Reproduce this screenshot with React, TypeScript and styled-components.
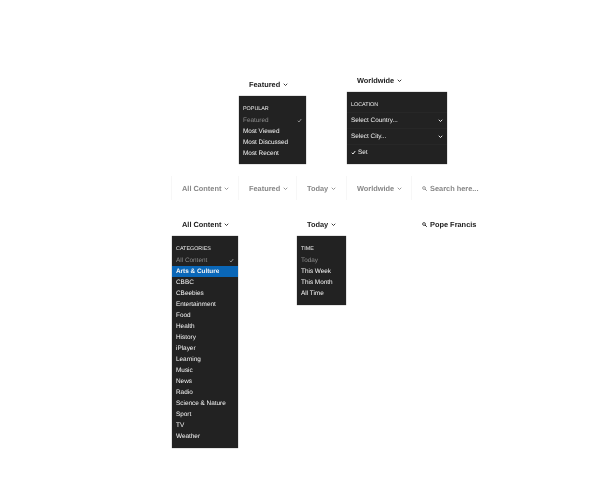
import React from "react";
import styled, { createGlobalStyle } from "styled-components";

const GlobalStyle = createGlobalStyle`
  html, body {
    margin: 0;
    background: #fff;
    font-family: "Liberation Sans", Arial, sans-serif;
    text-rendering: geometricPrecision;
  }
`;

const Page = styled.div`
  width: 600px;
  height: 484px;
  overflow: hidden;
  box-sizing: border-box;
  padding-top: 74px;
  background: #fff;
  filter: blur(0.3px);
`;

const TopRow = styled.div`
  display: flex;
  align-items: flex-end;
  height: 90px;
  padding-left: 239px;
  gap: 41px;
`;

const Column = styled.div`
  display: flex;
  flex-direction: column;
`;

const Label = styled.div<{ $indent?: number }>`
  display: flex;
  align-items: center;
  gap: 3px;
  height: 12px;
  margin-bottom: 6px;
  padding-left: ${(p) => p.$indent ?? 0}px;
  font-size: 7.4px;
  font-weight: bold;
  color: #222;
  white-space: nowrap;
`;

const Panel = styled.div<{ $width: number; $height: number }>`
  width: ${(p) => p.$width}px;
  height: ${(p) => p.$height}px;
  box-sizing: border-box;
  background: #222;
  padding-top: 8px;
  color: #fff;
  box-shadow: 0 0 1px rgba(0, 0, 0, 0.6);
`;

const Heading = styled.div`
  height: 11px;
  line-height: 11px;
  padding-left: 4px;
  font-size: 5.4px;
  color: #eee;
`;

const Item = styled.div<{ $active?: boolean; $muted?: boolean }>`
  display: flex;
  align-items: center;
  justify-content: space-between;
  height: 11px;
  padding: 0 4px;
  font-size: 6.4px;
  white-space: nowrap;
  background: ${(p) => (p.$active ? "#0a67b8" : "transparent")};
  color: ${(p) => (p.$muted ? "#8c8c8c" : "#f6f6f6")};
  font-weight: ${(p) => (p.$active ? "bold" : "normal")};
`;

const SelectGroup = styled.div`
  margin-top: 1px;
`;

const SelectRow = styled.div`
  display: flex;
  align-items: center;
  justify-content: space-between;
  box-sizing: border-box;
  height: 16px;
  padding: 0 4px;
  border-top: 1px solid #272727;
  font-size: 6.4px;
  color: #f2f2f2;
`;

const SetRow = styled(SelectRow)`
  justify-content: flex-start;
  gap: 2px;
`;

const Toolbar = styled.div`
  display: flex;
  height: 25px;
  margin: 11px 0 0 171px;
  padding-top: 1px;
  box-sizing: border-box;
  color: #888;
`;

const Cell = styled.div<{ $width: number }>`
  display: flex;
  align-items: center;
  gap: 3px;
  box-sizing: border-box;
  width: ${(p) => p.$width}px;
  padding-left: 10px;
  font-size: 7.4px;
  font-weight: bold;
  white-space: nowrap;
  border-left: 1px solid #f7f7f7;
`;

const BottomRow = styled.div`
  display: grid;
  grid-template-columns: 125px 115px auto;
  margin: 18px 0 0 172px;
`;

const Chevron = ({ size = 5, color = "currentColor" }: { size?: number; color?: string }) => (
  <svg width={size} height={size} viewBox="0 0 10 10" fill="none">
    <path d="M1.5 3.5 L5 7 L8.5 3.5" stroke={color} strokeWidth="1.8" />
  </svg>
);

const Check = ({ color = "#999" }: { color?: string }) => (
  <svg width="5" height="5" viewBox="0 0 10 10" fill="none">
    <path d="M1.5 5.5 L4 8 L8.5 2" stroke={color} strokeWidth="1.8" />
  </svg>
);

const Search = ({ color = "currentColor" }: { color?: string }) => (
  <svg width="5" height="5" viewBox="0 0 10 10" fill="none">
    <circle cx="4" cy="4" r="2.8" stroke={color} strokeWidth="1.6" />
    <path d="M6 6 L9.5 9.5" stroke={color} strokeWidth="2" />
  </svg>
);

const categories = [
  "CBBC",
  "CBeebies",
  "Entertainment",
  "Food",
  "Health",
  "History",
  "iPlayer",
  "Learning",
  "Music",
  "News",
  "Radio",
  "Science & Nature",
  "Sport",
  "TV",
  "Weather",
];

export default function App() {
  return (
    <Page>
      <GlobalStyle />
      <TopRow>
        <Column>
          <Label $indent={10}>
            Featured <Chevron />
          </Label>
          <Panel $width={67} $height={68}>
            <Heading>POPULAR</Heading>
            <Item $muted>
              Featured <Check />
            </Item>
            <Item>Most Viewed</Item>
            <Item>Most Discussed</Item>
            <Item>Most Recent</Item>
          </Panel>
        </Column>
        <Column>
          <Label $indent={10}>
            Worldwide <Chevron />
          </Label>
          <Panel $width={100} $height={72}>
            <Heading>LOCATION</Heading>
            <SelectGroup>
              <SelectRow>
                Select Country... <Chevron color="#fff" />
              </SelectRow>
              <SelectRow>
                Select City... <Chevron color="#fff" />
              </SelectRow>
              <SetRow>
                <Check color="#fff" /> Set
              </SetRow>
            </SelectGroup>
          </Panel>
        </Column>
      </TopRow>
      <Toolbar>
        <Cell $width={67}>
          All Content <Chevron />
        </Cell>
        <Cell $width={58}>
          Featured <Chevron />
        </Cell>
        <Cell $width={50}>
          Today <Chevron />
        </Cell>
        <Cell $width={65}>
          Worldwide <Chevron />
        </Cell>
        <Cell $width={80}>
          <Search /> Search here...
        </Cell>
      </Toolbar>
      <BottomRow>
        <Column>
          <Label $indent={10}>
            All Content <Chevron />
          </Label>
          <Panel $width={66} $height={212}>
            <Heading>CATEGORIES</Heading>
            <Item $muted>
              All Content <Check />
            </Item>
            <Item $active>Arts &amp; Culture</Item>
            {categories.map((name) => (
              <Item key={name}>{name}</Item>
            ))}
          </Panel>
        </Column>
        <Column>
          <Label $indent={10}>
            Today <Chevron />
          </Label>
          <Panel $width={49} $height={69}>
            <Heading>TIME</Heading>
            <Item $muted>Today</Item>
            <Item>This Week</Item>
            <Item>This Month</Item>
            <Item>All Time</Item>
          </Panel>
        </Column>
        <Column>
          <Label $indent={10}>
            <Search /> Pope Francis
          </Label>
        </Column>
      </BottomRow>
    </Page>
  );
}
